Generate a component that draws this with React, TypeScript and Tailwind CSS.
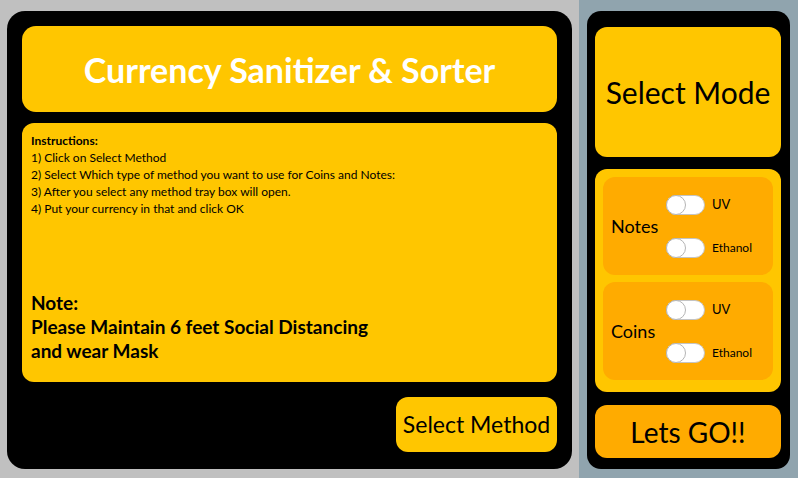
import React, { useState } from 'react';

const font = { fontFamily: 'Lato, "Open Sans", sans-serif' };

function Toggle({ on, onClick }: { on: boolean; onClick: () => void }) {
  return (
    <button
      type="button"
      onClick={onClick}
      className={`relative w-[39px] h-[20px] rounded-full border border-[#c4c4c4] ${on ? 'bg-[#2196f3]' : 'bg-white'}`}
    >
      <span
        className={`absolute top-[-1px] w-[20px] h-[20px] rounded-full bg-white border border-[#b5b5b5] ${on ? 'left-[18px]' : 'left-[-1px]'}`}
      />
    </button>
  );
}

function ModeBox({ label, top }: { label: string; top: string }) {
  const [uv, setUv] = useState(false);
  const [eth, setEth] = useState(false);
  return (
    <div className={`flex items-center h-[98px] bg-[#ffab00] rounded-[12px] pl-[8px] ${top}`}>
      <div className="w-[55px] text-[18px] text-black leading-none">{label}</div>
      <div className="flex flex-col gap-[23px]">
        <div className="flex items-center gap-[7px]">
          <Toggle on={uv} onClick={() => setUv(!uv)} />
          <span className="text-[13px] text-black">UV</span>
        </div>
        <div className="flex items-center gap-[7px]">
          <Toggle on={eth} onClick={() => setEth(!eth)} />
          <span className="text-[12px] text-black">Ethanol</span>
        </div>
      </div>
    </div>
  );
}

export default function App() {
  return (
    <div className="flex w-[798px] h-[478px]" style={font}>
      <div className="w-[579px] h-full bg-[#c0c0c0] pt-[11px] pl-[7px]">
        <div className="w-[565px] h-[458px] bg-black rounded-[18px] px-[15px] pt-[15px] flex flex-col">
          <div className="h-[86px] bg-[#ffc600] rounded-[14px] flex items-center justify-center">
            <h1 className="text-[34px] font-bold text-white">Currency Sanitizer &amp; Sorter</h1>
          </div>
          <div className="mt-[11px] h-[259px] bg-[#ffc600] rounded-[12px] pl-[9px] pt-[9px] pb-[19px] flex flex-col justify-between">
            <div className="text-[12px] leading-[17px] text-black">
              <p className="font-bold">Instructions:</p>
              <p>1) Click on Select Method</p>
              <p>2) Select Which type of method you want to use for Coins and Notes:</p>
              <p>3) After you select any method tray box will open.</p>
              <p>4) Put your currency in that and click OK</p>
            </div>
            <div className="text-[19px] leading-[24px] font-bold text-black">
              <p>Note:</p>
              <p>Please Maintain 6 feet Social Distancing</p>
              <p>and wear Mask</p>
            </div>
          </div>
          <div className="mt-[15px] flex justify-end">
            <button className="w-[161px] h-[55px] bg-[#ffc600] rounded-[12px] text-[23px] text-black">
              Select Method
            </button>
          </div>
        </div>
      </div>
      <div className="flex-1 h-full bg-[#90a4ae] pt-[11px] pl-[8px]">
        <div className="w-[203px] h-[458px] bg-black rounded-[14px] pl-[8px] pr-[9px] pt-[16px] flex flex-col">
          <div className="h-[130px] bg-[#ffc600] rounded-[12px] flex items-center justify-center">
            <span className="text-[30px] text-black">Select Mode</span>
          </div>
          <div className="mt-[12px] h-[223px] bg-[#ffc600] rounded-[12px] p-[8px] flex flex-col">
            <ModeBox label="Notes" top="" />
            <ModeBox label="Coins" top="mt-[7px]" />
          </div>
          <button className="mt-[13px] h-[53px] bg-[#ffab00] rounded-[12px] text-[28px] text-black">
            Lets GO!!
          </button>
        </div>
      </div>
    </div>
  );
}
